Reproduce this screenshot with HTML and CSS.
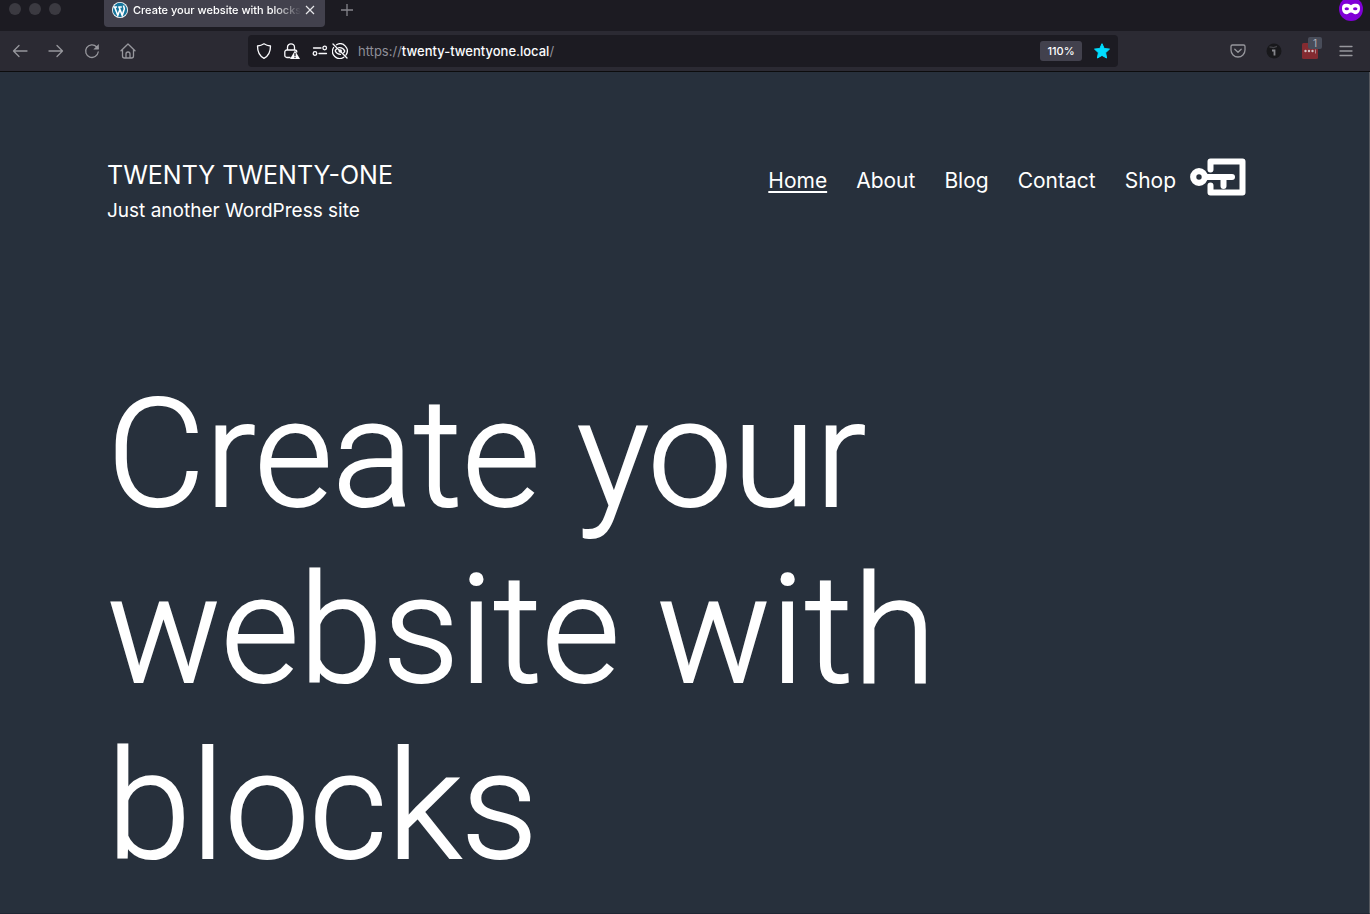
FILE: index.html
```html
<!DOCTYPE html>
<html lang="en">
<head>
  <meta charset="utf-8">
  <title>Create your website with blocks</title>
  <link rel="stylesheet" href="styles.css">
</head>
<body>
  <div class="browser">
    <div class="tab-strip">
      <div class="window-controls">
        <span class="dot"></span>
        <span class="dot"></span>
        <span class="dot"></span>
      </div>
      <div class="tab">
        <svg class="favicon" viewBox="0 0 16 16">
          <circle cx="8" cy="8" r="8" fill="#fff"/>
          <circle cx="8" cy="8" r="7.2" fill="#16759c"/>
          <path d="M1.500 5h3.600M6.200 5h3.600M2.600 5l3.200 8.300L8 7.200M7 5l3.200 8.300 2-6c.4-1.600-.8-2.200-.6-3.800" fill="none" stroke="#fff" stroke-width="1.600"/>
        </svg>
        <span class="tab-title">Create your website with blocks</span>
        <button class="tab-close" aria-label="Close tab">
          <svg width="10" height="10" viewBox="0 0 10 10"><path d="M1 1l8 8M9 1L1 9" fill="none" stroke="#e6e6ea" stroke-width="1.200"/></svg>
        </button>
      </div>
      <button class="new-tab" aria-label="New tab">
        <svg width="14" height="14" viewBox="0 0 14 14"><path d="M7 1v12M1 7h12" fill="none" stroke="#85858c" stroke-width="1.300"/></svg>
      </button>
      <svg class="private-badge" viewBox="0 0 24 24">
        <circle cx="12" cy="12" r="12" fill="#8000d7"/>
        <path d="M12 8.200c-1.300-.9-3-1.400-5-1.400-2.400 0-4 1.200-4 4.200 0 4 2 6.200 4.500 6.200 2 0 2.700-1.700 4.500-1.700s2.500 1.700 4.500 1.700c2.500 0 4.500-2.200 4.500-6.200 0-3-1.600-4.200-4-4.200-2 0-3.700.5-5 1.400z" fill="#fff"/>
        <ellipse cx="7.800" cy="11.700" rx="2.200" ry="1.500" fill="#8000d7"/>
        <ellipse cx="16.200" cy="11.700" rx="2.200" ry="1.500" fill="#8000d7"/>
      </svg>
    </div>

    <div class="toolbar">
      <div class="nav-buttons">
        <button class="tool" aria-label="Back">
          <svg class="icon" viewBox="0 0 16 16"><path d="M15 8H1.500M7 2.500L1.500 8 7 13.500"/></svg>
        </button>
        <button class="tool" aria-label="Forward">
          <svg class="icon" viewBox="0 0 16 16"><path d="M1 8h13.500M9 2.500L14.500 8 9 13.500"/></svg>
        </button>
        <button class="tool" aria-label="Reload">
          <svg class="icon" viewBox="0 0 16 16"><path d="M14.200 9A6.300 6.300 0 1 1 12.500 3.800L14 5.300"/><path class="solid" d="M14.800 1v5.500H9.300z"/></svg>
        </button>
        <button class="tool" aria-label="Home">
          <svg class="icon" viewBox="0 0 16 16"><path d="M1 7.700L8 1l7 6.700M2.500 6.500V13a2 2 0 0 0 2 2h7a2 2 0 0 0 2-2V6.500M6 15v-4a2 2 0 0 1 4 0v4"/></svg>
        </button>
      </div>

      <form class="url-bar">
        <svg class="icon bright shield" viewBox="0 0 16 16"><path d="M8 .8c2.200 1.500 4.300 2 6.500 2.200C14.500 9 12.600 13 8 15.300 3.400 13 1.500 9 1.500 3 3.700 2.800 5.800 2.300 8 .8z"/></svg>
        <svg class="icon bright lock" viewBox="0 0 16 16">
          <path d="M3.500 7V4.300a3.500 3.500 0 0 1 7 0V7M6 14.500H2.800a2 2 0 0 1-2-2V9a2 2 0 0 1 2-2h8a2 2 0 0 1 2 2"/>
          <path class="solid" d="M11 7.500L16 16H6z"/><path class="mark" d="M11 10.500v2.200M11 14.400v.1"/>
        </svg>
        <svg class="icon bright settings" viewBox="0 0 16 16"><circle cx="12.700" cy="5" r="1.800"/><circle cx="3" cy="10.500" r="1.800"/><path d="M1.500 5h7.500M7 10.500h7.500"/></svg>
        <svg class="icon bright" viewBox="0 0 16 16">
          <path d="M4.500 1.700A7.200 7.200 0 0 1 14 12M1.600 4.500A7.200 7.200 0 0 0 11.800 14.200M1 1l14 14"/>
          <path d="M6.800 4.700C9.500 4.200 11.500 5.500 12.800 8c-.4.800-.8 1.400-1.300 1.900M4.500 6C4 6.500 3.500 7.200 3.200 8c1.200 2.200 3 3.500 5.300 3.400"/>
          <circle class="solid" cx="8.200" cy="8" r="1.800"/>
        </svg>
        <a class="url" href="https://twenty-twentyone.local/"><span>https://</span>twenty-twentyone.local<span>/</span></a>
        <button class="zoom" type="button">110%</button>
        <button class="star" type="button" aria-label="Edit bookmark">
          <svg width="16" height="16" viewBox="0 0 16 16"><path d="M8 .7l2.200 4.800 5.300.6-3.900 3.600 1 5.300L8 12.400 3.400 15l1-5.300L.5 6.100l5.300-.6z" fill="#00ddff" stroke="#00ddff" stroke-linejoin="round"/></svg>
        </button>
      </form>

      <div class="extensions">
        <button class="tool" aria-label="Save to Pocket">
          <svg class="icon" viewBox="0 0 16 16"><path d="M2.500 2h11A1.500 1.500 0 0 1 15 3.500V7A7 7 0 0 1 1 7V3.500A1.500 1.500 0 0 1 2.500 2zM4.800 6.200L8 9.300l3.200-3.100"/></svg>
        </button>
        <button class="tool" aria-label="Extension">
          <svg class="ext" viewBox="0 0 16 16"><circle cx="8" cy="8" r="7.500" fill="#18181b"/><path d="M3.500 3.800l4 .8 3.500-1.200" fill="none" stroke="#444449" stroke-width="1.200"/><path d="M6 7.500h2.500v5" fill="none" stroke="#85858b" stroke-width="1.800"/></svg>
        </button>
        <button class="tool" aria-label="Password extension">
          <svg class="ext" viewBox="0 0 16 16"><rect width="16" height="16" rx="1.500" fill="#842b31"/><circle cx="3.500" cy="8" r="1.200" fill="#d4c4c7"/><circle cx="7" cy="8" r="1.200" fill="#d4c4c7"/><circle cx="10.500" cy="8" r="1.200" fill="#d4c4c7"/><path d="M13.500 6.500v4" stroke="#b38a90" fill="none"/></svg>
          <span class="count">1</span>
        </button>
        <button class="tool" aria-label="Menu">
          <svg class="icon" viewBox="0 0 16 16"><path d="M2 3.500h12M2 8h12M2 12.500h12"/></svg>
        </button>
      </div>
    </div>
  </div>

  <div class="site">
    <header class="site-header">
      <div class="branding">
        <div class="site-title">TWENTY TWENTY-ONE</div>
        <p class="site-description">Just another WordPress site</p>
      </div>
      <nav class="menu">
        <a class="current" href="#">Home</a>
        <a href="#">About</a>
        <a href="#">Blog</a>
        <a href="#">Contact</a>
        <a href="#">Shop</a>
        <a class="login" href="#" aria-label="Log in">
          <svg width="56" height="40" viewBox="0 0 56 40" fill="none" stroke="#fff" stroke-linecap="round" stroke-linejoin="round">
            <path d="M20.500 13.500V5.500h32v31h-32v-7" stroke-width="6"/>
            <circle cx="9" cy="21" r="5.800" stroke-width="6.200"/>
            <path d="M15 21h27" stroke-width="6"/>
            <path d="M33.500 23v7" stroke-width="6"/>
          </svg>
        </a>
      </nav>
    </header>
    <main>
      <h1 class="headline">Create your website with blocks</h1>
    </main>
  </div>
</body>
</html>
```
FILE: styles.css
```css
* {
  box-sizing: border-box;
}

body {
  margin: 0;
  min-height: 100vh;
  display: flex;
  flex-direction: column;
  background-color: #27303c;
  color: #fff;
  font-family: Inter, "Liberation Sans", sans-serif;
}

button {
  padding: 0;
  border: none;
  background: none;
  color: inherit;
  font-family: inherit;
  cursor: pointer;
}

svg {
  display: block;
}

/* Tab strip */
.tab-strip {
  display: flex;
  align-items: flex-start;
  height: 31px;
  padding: 0 8px 0 9px;
  background-color: #1c1b22;
}

.window-controls {
  display: flex;
  gap: 8px;
  width: 95px;
  padding-top: 3px;
}

.dot {
  width: 12px;
  height: 12px;
  border-radius: 50%;
  background-color: #3b3a41;
}

.tab {
  display: flex;
  align-items: center;
  width: 221px;
  height: 27px;
  padding: 0 11px 8px 8px;
  border-radius: 0 0 4px 4px;
  background-color: #42414d;
}

.favicon {
  flex: none;
  width: 16px;
  height: 16px;
  margin-right: 5px;
}

.tab-title {
  flex: 1;
  white-space: nowrap;
  font-size: 11px;
  font-weight: 500;
  line-height: 18px;
  -webkit-mask-image: linear-gradient(to left, transparent, #000 28px);
  mask-image: linear-gradient(to left, transparent, #000 28px);
}

.tab-close {
  margin-left: 4px;
}

.new-tab {
  margin: 3px 0 0 15px;
}

.private-badge {
  width: 24px;
  height: 24px;
  margin: -3px -1px 0 auto;
}

/* Toolbar */
.toolbar {
  display: flex;
  align-items: center;
  height: 41px;
  padding: 0 16px 0 12px;
  border-bottom: 1px solid #0c0c0d;
  background-color: #2b2a33;
}

.nav-buttons {
  display: flex;
  gap: 20px;
  width: 236px;
}

.tool {
  position: relative;
  width: 16px;
  height: 16px;
}

.icon {
  flex: none;
  width: 16px;
  height: 16px;
  fill: none;
  stroke: #97979d;
  stroke-width: 1.3;
  stroke-linecap: round;
  stroke-linejoin: round;
}

.icon .solid {
  fill: #97979d;
  stroke: none;
}

.icon.bright {
  stroke: #fbfbfe;
}

.icon.bright .solid {
  fill: #fbfbfe;
}

.icon .mark {
  stroke: #1c1b22;
}

.url-bar {
  flex: 1;
  display: flex;
  align-items: center;
  height: 32px;
  padding: 0 8px;
  border-radius: 4px;
  background-color: #1c1b22;
}

.shield,
.lock {
  margin-right: 12px;
}

.settings {
  margin-right: 4px;
}

.url {
  flex: 1;
  margin-left: 10px;
  color: #fbfbfe;
  font-size: 13px;
  font-weight: 500;
  line-height: 20px;
  text-decoration: none;
}

.url span {
  color: #8f8f98;
  font-weight: 400;
}

.zoom {
  width: 42px;
  height: 20px;
  margin-right: 12px;
  border-radius: 3px;
  background-color: #42414d;
  font-size: 11px;
  font-weight: 500;
}

.extensions {
  display: flex;
  gap: 20px;
  margin-left: 112px;
}

.ext {
  width: 16px;
  height: 16px;
}

.count {
  position: absolute;
  top: -6px;
  right: -4px;
  width: 14px;
  height: 12px;
  border-radius: 2px;
  background-color: #484c59;
  color: #b4b5bc;
  font-size: 10px;
  line-height: 12px;
}

/* Site */
.site {
  flex: 1;
  padding: 84px 123px 0 107px;
  border-right: 1px solid #55585e;
  border-bottom: 1px solid #202633;
}

.site-header {
  display: flex;
  justify-content: space-between;
  align-items: flex-start;
}

.site-title {
  font-size: 25px;
  line-height: 38px;
}

.site-description {
  margin: 0;
  font-size: 19px;
  line-height: 34px;
}

.menu {
  display: flex;
  align-items: flex-end;
  gap: 29px;
}

.menu a {
  color: #fff;
  font-size: 21px;
  line-height: 30px;
  text-decoration: none;
}

.menu .current {
  text-decoration: underline;
  text-decoration-thickness: 2px;
  text-underline-offset: 3px;
}

.menu .login {
  margin-left: -15px;
}

.headline {
  max-width: 900px;
  margin: 139px 0 0;
  font-family: Roboto, Inter, sans-serif;
  font-size: 151px;
  font-weight: 300;
  line-height: 176px;
  -webkit-text-stroke: 2px #fff;
}
```
